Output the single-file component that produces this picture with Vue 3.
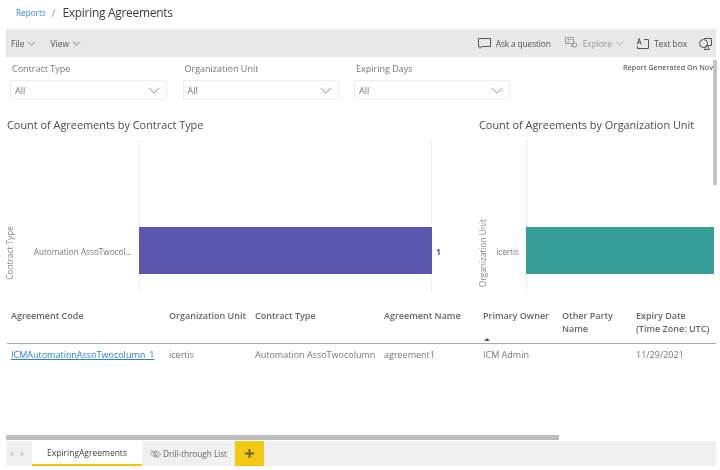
<script setup>
const columns = [
  { key: 'code', label: 'Agreement Code', width: 158 },
  { key: 'unit', label: 'Organization Unit', width: 86 },
  { key: 'type', label: 'Contract Type', width: 129 },
  { key: 'name', label: 'Agreement Name', width: 99 },
  { key: 'owner', label: 'Primary Owner', width: 79, sorted: true },
  { key: 'party', label: 'Other Party Name', width: 74 },
  { key: 'expiry', label: 'Expiry Date (Time Zone: UTC)', width: 80 }
]
const row = {
  code: 'ICMAutomationAssoTwocolumn_1',
  unit: 'icertis',
  type: 'Automation AssoTwocolumn',
  name: 'agreement1',
  owner: 'ICM Admin',
  party: '',
  expiry: '11/29/2021'
}
const filters = [
  { label: 'Contract Type', width: 157 },
  { label: 'Organization Unit', width: 156 },
  { label: 'Expiring Days', width: 156 }
]
</script>

<template>
  <div class="page">
    <header class="crumbs">
      <a class="crumb-link">Reports</a>
      <span class="crumb-sep">/</span>
      <h1 class="crumb-title">Expiring Agreements</h1>
    </header>

    <nav class="toolbar">
      <span class="tool">File
        <svg class="chev" viewBox="0 0 10 6"><path d="M1 1l4 4 4-4" /></svg>
      </span>
      <span class="tool">View
        <svg class="chev" viewBox="0 0 10 6"><path d="M1 1l4 4 4-4" /></svg>
      </span>
      <span class="tool-spacer"></span>
      <span class="tool tool-ask">
        <svg class="ico" width="13" height="13" viewBox="0 0 13 13"><path d="M.5 1.500h12v8H4L2 11.500v-2H.5z" /></svg>
        Ask a question
      </span>
      <span class="tool tool-explore">
        <svg class="ico" width="13" height="12" viewBox="0 0 13 12"><path d="M.5.500h8v6h-8zM2.500 2.500h4M2.500 4.500h2M6.500 6.500v3h2l1.500 1.500" /><circle cx="10" cy="8" r="2" /></svg>
        Explore
        <svg class="chev" viewBox="0 0 10 6"><path d="M1 1l4 4 4-4" /></svg>
      </span>
      <span class="tool tool-text">
        <svg class="ico" width="13" height="13" viewBox="0 0 13 13"><path d="M8 2.500h4.500v9H1.500V9M1.200 7.500L3.200 1.500l2 6M1.900 5.500h2.600" /></svg>
        Text box
      </span>
      <span class="tool tool-shape">
        <svg class="ico" width="13" height="13" viewBox="0 0 13 13"><circle cx="4.500" cy="6.500" r="4" /><path d="M5 1.500h7.500v7H9M5.500 12.500l2.500-4.500 2.500 4.500z" /></svg>
      </span>
    </nav>

    <section class="filters">
      <div v-for="f in filters" :key="f.label" class="filter" :style="{ width: f.width + 'px' }">
        <label class="filter-label">{{ f.label }}</label>
        <div class="select">
          <span>All</span>
          <svg class="select-chev" viewBox="0 0 14 8"><path d="M1 1l6 6 6-6" /></svg>
        </div>
      </div>
      <p class="generated">Report Generated On Nov</p>
    </section>

    <section class="charts">
      <article class="chart chart-type">
        <h2 class="chart-title">Count of Agreements by Contract Type</h2>
        <div class="plot">
          <span class="axis-title"><span>Contract Type</span></span>
          <span class="cat cat-type">Automation AssoTwocol...</span>
          <div class="bars bars-type"><div class="bar bar-purple"></div></div>
          <span class="value">1</span>
        </div>
      </article>
      <article class="chart chart-unit">
        <h2 class="chart-title">Count of Agreements by Organization Unit</h2>
        <div class="plot">
          <span class="axis-title"><span>Organization Unit</span></span>
          <span class="cat cat-unit">icertis</span>
          <div class="bars bars-unit"><div class="bar bar-teal"></div></div>
        </div>
      </article>
    </section>

    <section class="table">
      <div class="thead">
        <div v-for="c in columns" :key="c.key" class="th" :style="{ width: c.width + 'px' }">
          {{ c.label }}
          <i v-if="c.sorted" class="sort"></i>
        </div>
      </div>
      <div class="tbody">
        <div v-for="c in columns" :key="c.key" class="td" :class="{ link: c.key === 'code' }" :style="{ width: c.width + 'px' }">{{ row[c.key] }}</div>
      </div>
    </section>

    <div class="hscroll"><div class="hthumb"></div></div>

    <footer class="tabs">
      <span class="nav-arrows">
        <i class="arrow arrow-left"></i>
        <i class="arrow arrow-right"></i>
      </span>
      <span class="tab tab-active">ExpiringAgreements</span>
      <span class="tab tab-hidden">
        <svg class="eye" width="11" height="10" viewBox="0 0 11 10"><path d="M.5 4.500C2 2.500 4 2 5.500 2s3.500 1 5 3c-1 1.500-3 3-5 3S1.500 6 .5 4.500zM1 1l8 8" /><circle cx="5.500" cy="5" r="1.800" /></svg>
        Drill-through List
      </span>
      <span class="tab-add">
        <svg width="11" height="11" viewBox="0 0 11 11"><path d="M5.500 1v9M1 5.500h9" /></svg>
      </span>
    </footer>

    <div class="vscroll"></div>
  </div>
</template>

<style scoped>
.page {
  position: relative;
  width: 720px;
  height: 470px;
  overflow: hidden;
  background: #fff;
  display: flex;
  flex-direction: column;
  font-family: "Open Sans", "Noto Sans", sans-serif;
  color: #666;
  filter: blur(0.4px);
}
.crumbs {
  height: 29px;
  flex: none;
  display: flex;
  align-items: center;
  padding: 0 0 4px 16px;
  box-sizing: border-box;
}
.crumb-link { font-size: 8.200px; color: #3a8ad6; }
.crumb-sep { font-size: 10px; color: #999; margin: 0 7px 0 6px; }
.crumb-title { margin: 0; font-size: 12px; font-weight: 400; color: #3c3c3c; letter-spacing: -0.3px; }

.toolbar {
  height: 28px;
  flex: none;
  margin: 0 4px 0 6px;
  background: #e8e8e8;
  display: flex;
  align-items: center;
  padding: 0 0 0 5px;
  font-size: 8.500px;
  color: #555;
  box-sizing: border-box;
  overflow: hidden;
}
.tool { display: inline-flex; align-items: center; gap: 3px; white-space: nowrap; }
.tool + .tool { margin-left: 14px; }
.tool-spacer { flex: 1; }
.tool-ask { gap: 5px; letter-spacing: -0.2px; }
.tool-explore { color: #999; gap: 5px; margin-left: 15px; letter-spacing: -0.1px; }
.tool-explore .ico { stroke: #999; }
.tool-explore .chev { stroke: #999; margin-left: -2px; }
.tool.tool-text { gap: 5px; margin-left: 12px; letter-spacing: -0.1px; }
.tool.tool-shape { margin-left: 12px; margin-right: 4px; }
.chev { width: 9px; height: 5px; fill: none; stroke: #666; stroke-width: 1; }
.ico { fill: none; stroke: #555; stroke-width: 1; flex: none; }

.filters {
  position: relative;
  height: 43px;
  flex: none;
  display: flex;
  gap: 15.500px;
  padding: 6px 0 0 10px;
}
.filter { display: flex; flex-direction: column; flex: none; }
.filter-label { font-size: 9px; color: #777; height: 17px; line-height: 11px; padding-left: 2px; }
.select {
  height: 20px;
  box-sizing: border-box;
  border: 1px solid #eee;
  display: flex;
  align-items: center;
  justify-content: space-between;
  padding: 0 6px 0 4px;
  font-size: 9px;
  color: #777;
}
.select-chev { width: 12px; height: 7px; fill: none; stroke: #888; stroke-width: 1; }
.generated {
  position: absolute;
  left: 623px;
  top: 5px;
  width: 91px;
  margin: 0;
  font-size: 7.200px;
  font-weight: 600;
  color: #666;
  white-space: nowrap;
  overflow: hidden;
}

.charts { display: flex; flex: none; height: 190px; padding-top: 11px; box-sizing: border-box; }
.chart { flex: none; }
.chart-type { width: 478px; padding-left: 7px; box-sizing: border-box; }
.chart-unit { width: 236px; padding-left: 1px; box-sizing: border-box; overflow: hidden; }
.chart-title { margin: 0; font-size: 10.900px; font-weight: 400; line-height: 15px; color: #4a4a4a; white-space: nowrap; }
.plot { display: flex; align-items: center; height: 150px; margin-top: 9px; }
.axis-title {
  writing-mode: vertical-rl;
  transform: rotate(180deg);
  font-size: 8.300px;
  color: #888;
  white-space: nowrap;
  flex: none;
  margin-top: 74px;
}
.chart-type .axis-title { width: 12px; margin-left: -3px; }
.chart-unit .axis-title { width: 12px; margin-left: -2px; }
.cat { font-size: 8.200px; color: #777; white-space: nowrap; text-align: right; flex: none; margin-top: 70px; }
.cat-type { width: 116px; }
.cat-unit { width: 30px; }
.bars {
  flex: none;
  height: 150px;
  box-sizing: border-box;
  border-left: 1px dotted #ddd;
  display: flex;
  align-items: flex-start;
}
.bars-type { width: 293px; margin-left: 7px; border-right: 1px dotted #ddd; }
.bars-unit { width: 188px; margin-left: 7px; }
.bar { height: 47px; margin-top: 86px; width: 100%; margin-left: -1px; }
.bar-purple { background: #5c57ae; margin-right: -1px; width: calc(100% + 2px); }
.bar-teal { background: #379e9a; width: calc(100% + 1px); }
.value { font-size: 8.500px; font-weight: 700; color: #4a479e; margin: 70px 0 0 4px; }

.table { flex: none; margin: 0 4px 0 7px; height: 139px; box-sizing: border-box; }
.thead { display: flex; height: 47px; padding-left: 4px; border-bottom: 1px solid #aaa; }
.th {
  position: relative;
  flex: none;
  box-sizing: border-box;
  padding-top: 13px;
  padding-right: 4px;
  font-size: 9px;
  line-height: 13px;
  font-weight: 600;
  color: #666;
}
.sort {
  position: absolute;
  left: 1px;
  bottom: 2px;
  width: 0;
  height: 0;
  border-left: 3px solid transparent;
  border-right: 3px solid transparent;
  border-bottom: 3px solid #555;
}
.tbody { display: flex; padding: 4px 0 0 4px; }
.td { flex: none; box-sizing: border-box; font-size: 9px; line-height: 13px; color: #777; white-space: nowrap; }
.td.link { color: #2f7fd0; text-decoration: underline; }

.hscroll { margin: 0 0 0 6px; height: 6px; flex: none; }
.hthumb { width: 553px; height: 5px; background: #bdbdbd; }

.tabs {
  height: 25px;
  flex: none;
  margin: 0 4px 0 6px;
  background: #f0f0f0;
  display: flex;
  align-items: stretch;
  font-size: 8.500px;
  color: #666;
}
.nav-arrows { width: 26px; display: flex; align-items: center; justify-content: space-between; padding: 0 8px 0 4px; box-sizing: border-box; }
.arrow { width: 0; height: 0; border-top: 3px solid transparent; border-bottom: 3px solid transparent; }
.arrow-left { border-right: 3px solid #ccc; }
.arrow-right { border-left: 3px solid #ccc; }
.tab { display: inline-flex; align-items: center; justify-content: center; gap: 2px; width: 93px; box-sizing: border-box; white-space: nowrap; }
.tab-active { width: 110px; background: #fff; color: #444; border-bottom: 2px solid #f2c811; }
.tab-hidden { font-size: 8.300px; letter-spacing: -0.05px; }
.eye { fill: none; stroke: #888; stroke-width: .8; }
.tab-add { width: 29px; background: #f2c811; display: flex; align-items: center; justify-content: center; }
.tab-add svg { fill: none; stroke: #6b6340; stroke-width: 2; }

.vscroll {
  position: absolute;
  right: 3px;
  top: 60px;
  width: 4px;
  height: 125px;
  background: #c4c4c4;
}
</style>
